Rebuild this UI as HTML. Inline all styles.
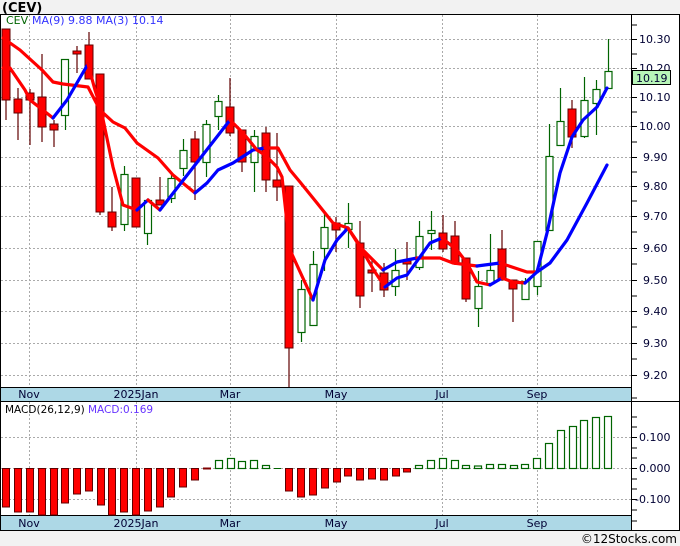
<!DOCTYPE html>
<html><head><meta charset="utf-8"><style>
html,body{margin:0;padding:0;background:#f2f2f2;}
svg{display:block;font-family:"DejaVu Sans","Liberation Sans",sans-serif;}
.r{fill:#ff0000;stroke:#600000;stroke-width:1}
.g{fill:#fff;stroke:#006400;stroke-width:1.2}
.wr{stroke:#600000;stroke-width:1.2}
.wg{stroke:#006400;stroke-width:1.2}
.grid{stroke:#aaa;stroke-width:1;stroke-dasharray:2,2}
.ax{font-size:11px;fill:#000033}
.mr{fill:none;stroke:#ff0000;stroke-width:3.2;stroke-linejoin:round;stroke-linecap:round}
.mb{fill:none;stroke:#0000ff;stroke-width:3.2;stroke-linejoin:round;stroke-linecap:round}
</style></head><body>
<svg width="680" height="546" viewBox="0 0 680 546" xmlns="http://www.w3.org/2000/svg">
<rect x="0" y="0" width="680" height="546" fill="#f2f2f2"/>
<text x="2" y="12" font-size="13" font-weight="bold" fill="#000">(CEV)</text>
<!-- panels -->
<rect x="0.5" y="14.5" width="679" height="516" fill="#fff" stroke="#000"/>
<rect x="1" y="387" width="631" height="14" fill="#add8e6"/>
<rect x="1" y="515" width="631" height="15" fill="#add8e6"/>
<line x1="0" y1="387.5" x2="632" y2="387.5" stroke="#000"/>
<line x1="0" y1="401.5" x2="680" y2="401.5" stroke="#000"/>
<line x1="0" y1="515.5" x2="632" y2="515.5" stroke="#000"/>
<line x1="0" y1="530.5" x2="680" y2="530.5" stroke="#000"/>
<line x1="631.5" y1="14" x2="631.5" y2="531" stroke="#000"/>
<!-- grid -->
<g class="grid">
<line x1="1" y1="39.5" x2="631" y2="39.5"/><line x1="1" y1="68.5" x2="631" y2="68.5"/><line x1="1" y1="97.5" x2="631" y2="97.5"/><line x1="1" y1="126.5" x2="631" y2="126.5"/><line x1="1" y1="157.5" x2="631" y2="157.5"/><line x1="1" y1="186.5" x2="631" y2="186.5"/><line x1="1" y1="216.5" x2="631" y2="216.5"/><line x1="1" y1="248.5" x2="631" y2="248.5"/><line x1="1" y1="280.5" x2="631" y2="280.5"/><line x1="1" y1="311.5" x2="631" y2="311.5"/><line x1="1" y1="343.5" x2="631" y2="343.5"/><line x1="1" y1="375.5" x2="631" y2="375.5"/>
<line x1="1" y1="437.5" x2="631" y2="437.5"/><line x1="1" y1="468.5" x2="631" y2="468.5"/><line x1="1" y1="499.5" x2="631" y2="499.5"/>
<line x1="29.5" y1="15" x2="29.5" y2="387"/><line x1="136.5" y1="15" x2="136.5" y2="387"/><line x1="230.5" y1="15" x2="230.5" y2="387"/><line x1="336.5" y1="15" x2="336.5" y2="387"/><line x1="442.5" y1="15" x2="442.5" y2="387"/><line x1="537.5" y1="15" x2="537.5" y2="387"/>
<line x1="29.5" y1="402" x2="29.5" y2="515"/><line x1="136.5" y1="402" x2="136.5" y2="515"/><line x1="230.5" y1="402" x2="230.5" y2="515"/><line x1="336.5" y1="402" x2="336.5" y2="515"/><line x1="442.5" y1="402" x2="442.5" y2="515"/><line x1="537.5" y1="402" x2="537.5" y2="515"/>
</g>
<!-- axis ticks -->
<g stroke="#000" stroke-width="1">
<line x1="632" y1="25" x2="637" y2="25"/><line x1="632" y1="39.5" x2="637" y2="39.5"/><line x1="632" y1="54" x2="637" y2="54"/><line x1="632" y1="68.5" x2="637" y2="68.5"/><line x1="632" y1="83" x2="637" y2="83"/><line x1="632" y1="97.5" x2="637" y2="97.5"/><line x1="632" y1="112" x2="637" y2="112"/><line x1="632" y1="126.5" x2="637" y2="126.5"/><line x1="632" y1="142" x2="637" y2="142"/><line x1="632" y1="157.5" x2="637" y2="157.5"/><line x1="632" y1="172" x2="637" y2="172"/><line x1="632" y1="186.5" x2="637" y2="186.5"/><line x1="632" y1="201" x2="637" y2="201"/><line x1="632" y1="216.5" x2="637" y2="216.5"/><line x1="632" y1="232" x2="637" y2="232"/><line x1="632" y1="248.5" x2="637" y2="248.5"/><line x1="632" y1="264" x2="637" y2="264"/><line x1="632" y1="280.5" x2="637" y2="280.5"/><line x1="632" y1="296" x2="637" y2="296"/><line x1="632" y1="311.5" x2="637" y2="311.5"/><line x1="632" y1="327" x2="637" y2="327"/><line x1="632" y1="343.5" x2="637" y2="343.5"/><line x1="632" y1="359" x2="637" y2="359"/><line x1="632" y1="375.5" x2="637" y2="375.5"/><line x1="632" y1="398" x2="637" y2="398"/>
<line x1="632" y1="417" x2="637" y2="417"/><line x1="632" y1="427" x2="637" y2="427"/><line x1="632" y1="437.5" x2="637" y2="437.5"/><line x1="632" y1="448" x2="637" y2="448"/><line x1="632" y1="458" x2="637" y2="458"/><line x1="632" y1="468.5" x2="637" y2="468.5"/><line x1="632" y1="479" x2="637" y2="479"/><line x1="632" y1="489" x2="637" y2="489"/><line x1="632" y1="499.5" x2="637" y2="499.5"/><line x1="632" y1="510" x2="637" y2="510"/><line x1="632" y1="521" x2="637" y2="521"/>
</g>
<g class="ax">
<text x="639" y="43">10.30</text><text x="639" y="72">10.20</text><text x="639" y="101">10.10</text><text x="639" y="130">10.00</text><text x="643" y="161">9.90</text><text x="643" y="190">9.80</text><text x="643" y="220">9.70</text><text x="643" y="252">9.60</text><text x="643" y="284">9.50</text><text x="643" y="315">9.40</text><text x="643" y="347">9.30</text><text x="643" y="379">9.20</text>
<text x="639" y="441">0.100</text><text x="639" y="472">0.000</text><text x="635" y="503">-0.100</text>
</g>
<rect x="632.5" y="70.5" width="38" height="14" fill="#b8f5b8" stroke="#000"/>
<text x="636" y="82" class="ax" font-size="12">10.19</text>
<!-- date labels -->
<g class="ax" text-anchor="middle" fill="#000033">
<text x="29" y="398">Nov</text><text x="136" y="398">2025Jan</text><text x="230" y="398">Mar</text><text x="336" y="398">May</text><text x="442" y="398">Jul</text><text x="537" y="398">Sep</text>
<text x="29" y="527">Nov</text><text x="136" y="527">2025Jan</text><text x="230" y="527">Mar</text><text x="336" y="527">May</text><text x="442" y="527">Jul</text><text x="537" y="527">Sep</text>
</g>
<!-- legends -->
<text y="24" font-size="11"><tspan x="6" fill="#006400">CEV</tspan><tspan x="32" fill="#3333ff">MA(9)</tspan><tspan x="68" fill="#3333ff">9.88</tspan><tspan x="96" fill="#3333ff">MA(3)</tspan><tspan x="132" fill="#3333ff">10.14</tspan></text>
<text y="413" font-size="10.5"><tspan x="5" fill="#000">MACD(26,12,9)</tspan><tspan x="88" fill="#6633ff">MACD:0.169</tspan></text>
<!-- candles -->
<g>
<line class="wr" x1="6" y1="29" x2="6" y2="120"/><rect class="r" x="2" y="29" width="8" height="71"/>
<line class="wr" x1="18" y1="88" x2="18" y2="140"/><rect class="r" x="14" y="99" width="8" height="14"/>
<line class="wr" x1="30" y1="89" x2="30" y2="145"/><rect class="r" x="26" y="93" width="8" height="7"/>
<line class="wr" x1="42" y1="54" x2="42" y2="142"/><rect class="r" x="38" y="97" width="8" height="30"/>
<line class="wr" x1="54" y1="120" x2="54" y2="147"/><rect class="r" x="50" y="124" width="8" height="6"/>
<line class="wg" x1="65.5" y1="59" x2="65.5" y2="130"/><rect class="g" x="61.5" y="59.5" width="7" height="56"/>
<line class="wr" x1="77" y1="46" x2="77" y2="73"/><rect class="r" x="73" y="51" width="8" height="3"/>
<line class="wr" x1="89" y1="32" x2="89" y2="79"/><rect class="r" x="85" y="45" width="8" height="34"/>
<line class="wr" x1="100" y1="74" x2="100" y2="215"/><rect class="r" x="96" y="74" width="8" height="138"/>
<line class="wr" x1="112" y1="187" x2="112" y2="231"/><rect class="r" x="108" y="212" width="8" height="15"/>
<line class="wg" x1="124.5" y1="166" x2="124.5" y2="231"/><rect class="g" x="121" y="174.5" width="7" height="50"/>
<line class="wr" x1="136" y1="178" x2="136" y2="227"/><rect class="r" x="132" y="178" width="8" height="49"/>
<line class="wg" x1="147.5" y1="200" x2="147.5" y2="245"/><rect class="g" x="144.5" y="200.5" width="7" height="33"/>
<line class="wr" x1="160" y1="177" x2="160" y2="205"/><rect class="r" x="156" y="200" width="8" height="5"/>
<line class="wg" x1="171.5" y1="172" x2="171.5" y2="203"/><rect class="g" x="168" y="178.5" width="7" height="20"/>
<line class="wg" x1="183.5" y1="139" x2="183.5" y2="176"/><rect class="g" x="180" y="150.5" width="7" height="18"/>
<line class="wr" x1="195" y1="131" x2="195" y2="200"/><rect class="r" x="191" y="139" width="8" height="23"/>
<line class="wg" x1="206.5" y1="120" x2="206.5" y2="177"/><rect class="g" x="203" y="124.5" width="7" height="38"/>
<line class="wg" x1="218.5" y1="95" x2="218.5" y2="130"/><rect class="g" x="215" y="101.5" width="7" height="15"/>
<line class="wr" x1="230" y1="78" x2="230" y2="136"/><rect class="r" x="226" y="107" width="8" height="26"/>
<line class="wr" x1="242" y1="130" x2="242" y2="172"/><rect class="r" x="238" y="130" width="8" height="32"/>
<line class="wg" x1="254.5" y1="130" x2="254.5" y2="192"/><rect class="g" x="251" y="136.5" width="7" height="26"/>
<line class="wr" x1="266" y1="127" x2="266" y2="192"/><rect class="r" x="262" y="133" width="8" height="47"/>
<line class="wr" x1="277" y1="133" x2="277" y2="201"/><rect class="r" x="273" y="180" width="8" height="7"/>
<line class="wr" x1="289" y1="186" x2="289" y2="387"/><rect class="r" x="285" y="186" width="8" height="162"/>
<line class="wg" x1="301.5" y1="280" x2="301.5" y2="342"/><rect class="g" x="298" y="289.5" width="7" height="43"/>
<line class="wg" x1="313.5" y1="251" x2="313.5" y2="326"/><rect class="g" x="310" y="264.5" width="7" height="61"/>
<line class="wg" x1="324.5" y1="211" x2="324.5" y2="271"/><rect class="g" x="321" y="227.5" width="7" height="21"/>
<line class="wr" x1="336" y1="217" x2="336" y2="252"/><rect class="r" x="332" y="223" width="8" height="7"/>
<line class="wg" x1="348.5" y1="203" x2="348.5" y2="248"/><rect class="g" x="345" y="223.5" width="7" height="6"/>
<line class="wr" x1="360" y1="221" x2="360" y2="308"/><rect class="r" x="356" y="243" width="8" height="53"/>
<line class="wr" x1="372" y1="260" x2="372" y2="292"/><rect class="r" x="368" y="270" width="8" height="3"/>
<line class="wr" x1="384" y1="263" x2="384" y2="297"/><rect class="r" x="380" y="273" width="8" height="17"/>
<line class="wg" x1="395.5" y1="249" x2="395.5" y2="296"/><rect class="g" x="392" y="270.5" width="7" height="16"/>
<line class="wr" x1="407" y1="242" x2="407" y2="280"/><rect class="r" x="403" y="261" width="8" height="3"/>
<line class="wg" x1="419.5" y1="221" x2="419.5" y2="270"/><rect class="g" x="416" y="236.5" width="7" height="31"/>
<line class="wg" x1="431.5" y1="211" x2="431.5" y2="250"/><rect class="g" x="428" y="230.5" width="7" height="3"/>
<line class="wr" x1="443" y1="215" x2="443" y2="252"/><rect class="r" x="439" y="233" width="8" height="16"/>
<line class="wr" x1="455" y1="221" x2="455" y2="265"/><rect class="r" x="451" y="236" width="8" height="27"/>
<line class="wr" x1="466" y1="258" x2="466" y2="302"/><rect class="r" x="462" y="258" width="8" height="41"/>
<line class="wg" x1="478.5" y1="271" x2="478.5" y2="327"/><rect class="g" x="475" y="286.5" width="7" height="22"/>
<line class="wg" x1="490.5" y1="234" x2="490.5" y2="285"/><rect class="g" x="487" y="270.5" width="7" height="13"/>
<line class="wr" x1="502" y1="230" x2="502" y2="280"/><rect class="r" x="498" y="249" width="8" height="31"/>
<line class="wr" x1="513" y1="280" x2="513" y2="322"/><rect class="r" x="509" y="280" width="8" height="9"/>
<line class="wg" x1="525.5" y1="278" x2="525.5" y2="299"/><rect class="g" x="522" y="281.5" width="7" height="18"/>
<line class="wg" x1="537.5" y1="241" x2="537.5" y2="295"/><rect class="g" x="534" y="241.5" width="7" height="45"/>
<line class="wg" x1="549.5" y1="124" x2="549.5" y2="230"/><rect class="g" x="546" y="156.5" width="7" height="74"/>
<line class="wg" x1="560.5" y1="88" x2="560.5" y2="145"/><rect class="g" x="557" y="121.5" width="7" height="24"/>
<line class="wr" x1="572" y1="100" x2="572" y2="148"/><rect class="r" x="568" y="109" width="8" height="28"/>
<line class="wg" x1="584.5" y1="77" x2="584.5" y2="138"/><rect class="g" x="581" y="100.5" width="7" height="36"/>
<line class="wg" x1="596.5" y1="80" x2="596.5" y2="135"/><rect class="g" x="593" y="89.5" width="7" height="14"/>
<line class="wg" x1="608.5" y1="39" x2="608.5" y2="88"/><rect class="g" x="605" y="71.5" width="7" height="17"/>
</g>
<!-- MA lines -->
<polyline class="mr" points="3,38 20,50 42,70 53,82 63,84 88,87 100,110 113,122 125,128 137,143 158,158 173,175 195,193"/>
<polyline class="mb" points="195,193 207,183 218,170 233,163 253,150 265,148"/>
<polyline class="mr" points="265,148 278,148 290,170 300,182 317,203 333,223 348,228 363,250 383,270"/>
<polyline class="mb" points="383,270 397,262 417,258"/>
<polyline class="mr" points="417,258 440,258 453,263 477,266"/>
<polyline class="mb" points="477,266 500,263"/>
<polyline class="mr" points="500,263 527,272 537,272"/>
<polyline class="mb" points="537,272 550,263 567,240 587,203 607,165"/>
<polyline class="mr" points="3,68 10,68 25,90 30,100 53,118"/>
<polyline class="mb" points="53,118 67,100 88,64"/>
<polyline class="mr" points="88,64 95,90 100,105 113,167 123,205 137,210"/>
<polyline class="mb" points="137,210 148,200"/>
<polyline class="mr" points="148,200 160,210"/>
<polyline class="mb" points="160,210 195,165 230,120"/>
<polyline class="mr" points="230,120 243,133 257,150 265,155 277,167 282,177 290,250 313,300"/>
<polyline class="mb" points="313,300 325,260 337,240 348,228"/>
<polyline class="mr" points="348,228 362,250 375,272 385,287"/>
<polyline class="mb" points="385,287 397,278 407,275 430,243 442,238"/>
<polyline class="mr" points="442,238 457,250 467,263 477,282 490,285"/>
<polyline class="mb" points="490,285 502,278"/>
<polyline class="mr" points="502,278 513,282 525,283"/>
<polyline class="mb" points="525,283 537,272 547,233 560,173 572,137 583,120 597,107 607,88"/>
<!-- MACD bars -->
<g>
<rect class="r" x="2.5" y="468.5" width="7" height="38.5"/>
<rect class="r" x="14.5" y="468.5" width="7" height="43.5"/>
<rect class="r" x="26.5" y="468.5" width="7" height="43.5"/>
<rect class="r" x="38.5" y="468.5" width="7" height="46.5"/>
<rect class="r" x="50.5" y="468.5" width="7" height="46.5"/>
<rect class="r" x="61.5" y="468.5" width="7" height="34.5"/>
<rect class="r" x="73.5" y="468.5" width="7" height="25.5"/>
<rect class="r" x="85.5" y="468.5" width="7" height="22.5"/>
<rect class="r" x="97.5" y="468.5" width="7" height="36.5"/>
<rect class="r" x="108.5" y="468.5" width="7" height="46.5"/>
<rect class="r" x="120.5" y="468.5" width="7" height="43.5"/>
<rect class="r" x="132.5" y="468.5" width="7" height="46.5"/>
<rect class="r" x="144.5" y="468.5" width="7" height="42.5"/>
<rect class="r" x="156.5" y="468.5" width="7" height="38.5"/>
<rect class="r" x="167.5" y="468.5" width="7" height="28.5"/>
<rect class="r" x="179.5" y="468.5" width="7" height="18.5"/>
<rect class="r" x="191.5" y="468.5" width="7" height="11.5"/>
<rect x="203" y="467.5" width="8" height="2" fill="#800000"/>
<rect class="g" x="215.5" y="460.5" width="7" height="8"/>
<rect class="g" x="227.5" y="458.5" width="7" height="10"/>
<rect class="g" x="238.5" y="461.5" width="7" height="7"/>
<rect class="g" x="250.5" y="460.5" width="7" height="8"/>
<rect class="g" x="262.5" y="465.5" width="7" height="3"/>
<line x1="274" y1="468.5" x2="281" y2="468.5" stroke="#006400"/>
<rect class="r" x="285.5" y="468.5" width="7" height="22.5"/>
<rect class="r" x="297.5" y="468.5" width="7" height="28.5"/>
<rect class="r" x="309.5" y="468.5" width="7" height="26.5"/>
<rect class="r" x="321.5" y="468.5" width="7" height="19.5"/>
<rect class="r" x="333.5" y="468.5" width="7" height="13.5"/>
<rect class="r" x="344.5" y="468.5" width="7" height="7.5"/>
<rect class="r" x="356.5" y="468.5" width="7" height="11.5"/>
<rect class="r" x="368.5" y="468.5" width="7" height="10.5"/>
<rect class="r" x="380.5" y="468.5" width="7" height="11.5"/>
<rect class="r" x="392.5" y="468.5" width="7" height="7.5"/>
<rect class="r" x="403.5" y="468.5" width="7" height="3.5"/>
<rect class="g" x="415.5" y="465.5" width="7" height="3"/>
<rect class="g" x="427.5" y="460.5" width="7" height="8"/>
<rect class="g" x="439.5" y="458.5" width="7" height="10"/>
<rect class="g" x="451.5" y="460.5" width="7" height="8"/>
<rect class="g" x="462.5" y="465.5" width="7" height="3"/>
<rect class="g" x="474.5" y="466" width="7" height="2.5"/>
<rect class="g" x="486.5" y="464.5" width="7" height="4"/>
<rect class="g" x="498.5" y="464.5" width="7" height="4"/>
<rect class="g" x="510.5" y="465.5" width="7" height="3"/>
<rect class="g" x="521.5" y="464.5" width="7" height="4"/>
<rect class="g" x="533.5" y="458.5" width="7" height="10"/>
<rect class="g" x="545.5" y="443.5" width="7" height="25"/>
<rect class="g" x="557.5" y="430.5" width="7" height="38"/>
<rect class="g" x="569.5" y="426.5" width="7" height="42"/>
<rect class="g" x="580.5" y="420.5" width="7" height="48"/>
<rect class="g" x="592.5" y="417.5" width="7" height="51"/>
<rect class="g" x="604.5" y="416.5" width="7" height="52"/>
</g>
<rect x="0" y="531" width="680" height="15" fill="#f2f2f2"/>
<text x="677" y="543" font-size="12" text-anchor="end" fill="#000">©12Stocks.com</text>
</svg>
</body></html>
